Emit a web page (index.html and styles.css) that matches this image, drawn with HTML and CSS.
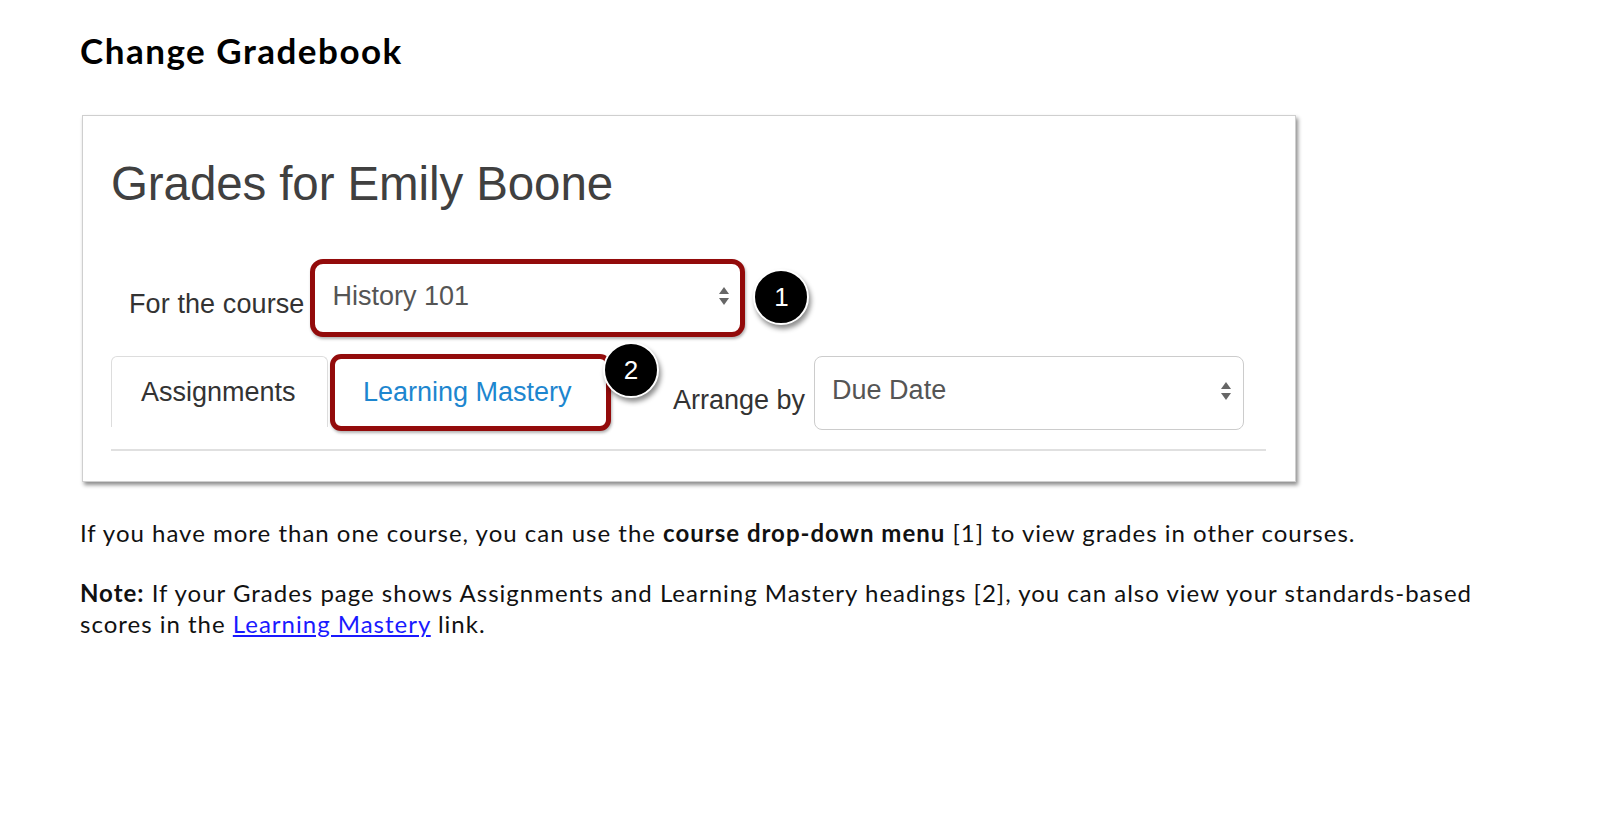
FILE: index.html
```html
<!DOCTYPE html>
<html lang="en">
<head>
  <meta charset="UTF-8" />
  <title>Change Gradebook</title>
  <link rel="stylesheet" href="styles.css">
</head>
<body>
  <div class="page">
    <h1 class="title">Change Gradebook</h1>

    <div class="shot">
      <h2 class="shot-title">Grades for Emily Boone</h2>

      <div class="course-row">
        <span class="label course-label">For the course</span>
        <div class="highlight course-hl">
          <div class="select course-select">
            <span>History 101</span>
            <svg class="arrows" width="12" height="20" viewBox="0 0 12 20"><polygon points="6,1 11,8 1,8"/><polygon points="1,12 11,12 6,19"/></svg>
          </div>
          <span class="badge badge-1">1</span>
        </div>
      </div>

      <div class="tabs-row">
        <div class="tab">Assignments</div>
        <div class="highlight tab-hl">
          <span class="tab-link">Learning Mastery</span>
          <span class="badge badge-2">2</span>
        </div>
        <span class="label arrange-label">Arrange by</span>
        <div class="select due-select">
          <span>Due Date</span>
          <svg class="arrows" width="12" height="20" viewBox="0 0 12 20"><polygon points="6,1 11,8 1,8"/><polygon points="1,12 11,12 6,19"/></svg>
        </div>
      </div>

      <div class="rule"></div>
    </div>

    <p class="text">If you have more than one course, you can use the <b>course drop-down menu</b> [1] to view grades in other courses.</p>
    <p class="text"><b>Note:</b> If your Grades page shows Assignments and Learning Mastery headings [2], you can also view your standards-based scores in the <a href="#">Learning Mastery</a> link.</p>
  </div>
</body>
</html>
```

FILE: styles.css
```css
body {
  margin: 0;
  background: #fff;
  color: #111;
  font-family: "Lato", "Open Sans", sans-serif;
}
.page {
  padding: 0 80px;
  width: 1430px;
}
.title {
  margin: 32px 0 0;
  font-size: 35px;
  line-height: 36px;
  font-weight: 700;
  letter-spacing: 1.5px;
  color: #000;
}

/* screenshot panel */
.shot {
  margin-top: 47px;
  margin-left: 2px;
  width: 1155px;
  padding: 40px 29px 30px 28px;
  border: 1px solid #cfcfcf;
  box-shadow: 2px 3px 4px rgba(0, 0, 0, 0.45);
  background: #fff;
  font-family: "Liberation Sans", Arial, sans-serif;
  color: #333;
}
.shot-title {
  margin: 0;
  font-size: 47.5px;
  line-height: 56px;
  font-weight: 400;
  color: #404040;
  letter-spacing: -0.1px;
}
.label {
  font-size: 27px;
  color: #333;
}
.course-row {
  display: flex;
  align-items: center;
  margin-top: 47px;
  height: 78px;
}
.course-label {
  margin-left: 18px;
  padding-top: 12px;
  margin-right: 6px;
  letter-spacing: 0.1px;
}
.highlight {
  position: relative;
  border: 5px solid #930b0b;
  border-radius: 13px;
  box-shadow: 1px 2px 3px rgba(0, 0, 0, 0.3);
  background: #fff;
}
.course-hl {
  width: 425px;
  height: 68px;
}
.select {
  display: flex;
  align-items: center;
  justify-content: space-between;
  font-size: 27px;
  color: #555;
  box-sizing: border-box;
}
.course-select {
  height: 100%;
  padding: 0 10px 4px 17px;
}
.arrows {
  fill: #666;
}
.badge {
  position: absolute;
  width: 52px;
  height: 52px;
  border: 2px solid #fff;
  border-radius: 50%;
  background: #000;
  color: #fff;
  font-size: 26px;
  display: flex;
  align-items: center;
  justify-content: center;
  box-shadow: 2px 4px 5px rgba(0, 0, 0, 0.45);
}
.badge-1 {
  left: 438px;
  top: 5px;
}
.badge-2 {
  left: 268px;
  top: -17px;
}

.tabs-row {
  display: flex;
  align-items: center;
  margin-top: 17px;
  height: 77px;
}
.tab {
  box-sizing: border-box;
  width: 217px;
  height: 71px;
  align-self: flex-end;
  margin-bottom: 4px;
  padding: 20px 0 0 29px;
  border: 1px solid #ddd;
  border-bottom: none;
  border-radius: 6px 6px 0 0;
  font-size: 27px;
  color: #333;
}
.tab-hl {
  box-sizing: border-box;
  margin-left: 2px;
  width: 281px;
  height: 77px;
  padding: 18px 0 0 28px;
  border-radius: 11px;
}
.tab-link {
  font-size: 27px;
  color: #1d86cf;
}
.arrange-label {
  margin-left: 62px;
  padding-top: 15px;
}
.due-select {
  margin-left: 9px;
  width: 430px;
  height: 74px;
  padding: 0 11px 4px 17px;
  border: 1px solid #ccc;
  border-radius: 8px;
}
.rule {
  margin-top: 18px;
  height: 2px;
  background: #e0e0e0;
}

/* body text */
.text {
  margin: 35px 0 0;
  font-size: 24px;
  line-height: 31px;
  letter-spacing: 1px;
}
.text + .text {
  margin-top: 29px;
}
.text a {
  color: #1a1aff;
}
```
